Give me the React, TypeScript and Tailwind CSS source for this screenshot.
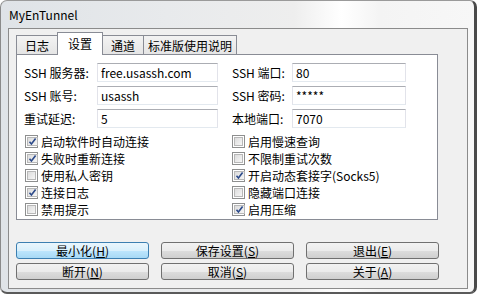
import React from "react";

const FONT = "font-['Noto_Sans_CJK_SC','Noto_Sans',sans-serif]";

function Input({ value, w }: { value: string; w: string }) {
  return (
    <div
      className={`${w} h-[19px] bg-white border border-[#abadb3] border-l-[#e2e3ea] border-r-[#e2e3ea] border-b-[#e3e9ef] flex items-center pl-[3px] text-[12px] leading-none text-black`}
    >
      {value}
    </div>
  );
}

function Check({ on, label }: { on?: boolean; label: React.ReactNode }) {
  return (
    <div className="h-[17px] flex items-center gap-[3px] text-[12px] leading-none text-black">
      <span className="w-[13px] h-[13px] border border-[#8e8f8f] bg-white p-[1px] flex">
        <span className="flex-1 border border-[#b8b8b8] bg-[linear-gradient(135deg,#dcdcdc_0%,#f6f6f6_100%)] flex items-center justify-center">
          {on ? (
            <svg width="9" height="9" viewBox="0 0 9 9">
              <path d="M1.5 4.8 L3.4 7 L7.6 1.4" fill="none" stroke="#2c4a8a" strokeWidth="1.6" />
            </svg>
          ) : null}
        </span>
      </span>
      <span>{label}</span>
    </div>
  );
}

function Btn({ text, k, focus }: { text: string; k: string; focus?: boolean }) {
  return (
    <div
      className={`w-[133px] h-[17px] rounded-[3px] border flex items-center justify-center text-[12px] leading-none text-black ${
        focus
          ? "border-[#3c7fb1] bg-[linear-gradient(180deg,#eaf6fd_0%,#d9f0fc_50%,#bee6fd_51%,#a7d9f5_100%)]"
          : "border-[#707070] bg-[linear-gradient(180deg,#f2f2f2_0%,#ebebeb_50%,#dddddd_51%,#cfcfcf_100%)]"
      }`}
    >
      {text}(<span className="underline underline-offset-1">{k}</span>)
    </div>
  );
}

export default function App() {
  return (
    <div className={`w-[477px] h-[294px] bg-white ${FONT}`}>
      {/* window frame */}
      <div className="w-full h-full flex flex-col rounded-[7px] border-l border-t border-l-[#8a8a8a] border-t-[#9a9a9a] border-r-[3px] border-b-[2px] border-r-[#4a4a4a] border-b-[#5a5a5a] bg-[linear-gradient(90deg,#dfe3e7_0%,#e8eaec_35%,#eeeeee_62%,#ffffff_72%,#f4f4f4_80%,#f7f7f7_100%)] pl-[7px] pr-[6px] pb-[3px]">
        <div className="h-[27px] flex items-center pl-[1px] text-[12px] text-black">MyEnTunnel</div>

        {/* client area */}
        <div className="flex-1 border border-[#8b8b8b] bg-[#f0f0f0] flex flex-col">
          {/* tabs */}
          <div className="h-[25px] flex items-end pl-[7px] text-[12px] leading-none text-black">
            <div className="w-[41px] h-[19px] border-l border-t border-[#898c95] bg-[linear-gradient(180deg,#f3f3f3,#e5e5e5)] flex items-center justify-center pt-[1px]">
              日志
            </div>
            <div className="relative z-10 w-[46px] h-[23px] -mb-[1px] border-l border-t border-r border-[#898c95] bg-white flex items-start justify-center pt-[5px]">
              设置
            </div>
            <div className="w-[41px] h-[19px] border-t border-r border-[#898c95] bg-[linear-gradient(180deg,#f3f3f3,#e5e5e5)] flex items-center justify-center pt-[1px]">
              通道
            </div>
            <div className="w-[93px] h-[19px] border-t border-r border-[#898c95] bg-[linear-gradient(180deg,#f3f3f3,#e5e5e5)] flex items-center justify-center pt-[1px]">
              标准版使用说明
            </div>
          </div>

          {/* tab page */}
          <div className="ml-[7px] w-[422px] h-[166px] border border-[#898c95] bg-white pt-[8px] flex flex-col">
            <div className="flex flex-col gap-[4px] pl-[7px] text-[12px] leading-none text-black">
              <div className="flex items-center">
                <span className="w-[73px]">SSH 服务器:</span>
                <Input value="free.usassh.com" w="w-[121px]" />
                <span className="w-[60px] ml-[14px]">SSH 端口:</span>
                <Input value="80" w="w-[114px]" />
              </div>
              <div className="flex items-center">
                <span className="w-[73px]">SSH 账号:</span>
                <Input value="usassh" w="w-[121px]" />
                <span className="w-[60px] ml-[14px]">SSH 密码:</span>
                <Input value="*****" w="w-[114px]" />
              </div>
              <div className="flex items-center">
                <span className="w-[73px]">重试延迟:</span>
                <Input value="5" w="w-[121px]" />
                <span className="w-[60px] ml-[14px]">本地端口:</span>
                <Input value="7070" w="w-[114px]" />
              </div>
            </div>

            <div className="mt-[5px] pl-[8px] grid grid-cols-[207px_1fr]">
              <Check on label="启动软件时自动连接" />
              <Check label="启用慢速查询" />
              <Check on label="失败时重新连接" />
              <Check label="不限制重试次数" />
              <Check label="使用私人密钥" />
              <Check on label="开启动态套接字(Socks5)" />
              <Check on label="连接日志" />
              <Check label="隐藏端口连接" />
              <Check label="禁用提示" />
              <Check on label="启用压缩" />
            </div>
          </div>

          {/* buttons */}
          <div className="mt-[22px] pl-[7px] grid grid-cols-[133px_133px_133px] gap-x-[12px] gap-y-[4px]">
            <Btn text="最小化" k="H" focus />
            <Btn text="保存设置" k="S" />
            <Btn text="退出" k="E" />
            <Btn text="断开" k="N" />
            <Btn text="取消" k="S" />
            <Btn text="关于" k="A" />
          </div>
        </div>
      </div>
    </div>
  );
}
